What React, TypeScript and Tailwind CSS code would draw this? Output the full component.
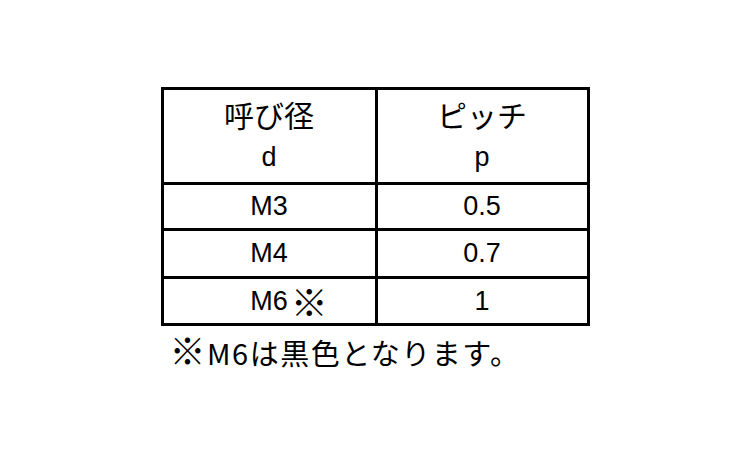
const font = { fontFamily: '"Liberation Sans", "Noto Sans CJK JP", sans-serif' };
const cjk = { fontFamily: '"Noto Sans CJK JP", sans-serif' };

interface Row {
  size: string;
  mark?: boolean;
  pitch: string;
  h: string;
}

const rows: Row[] = [
  { size: "M3", pitch: "0.5", h: "h-[46px]" },
  { size: "M4", pitch: "0.7", h: "h-[48px]" },
  { size: "M6", mark: true, pitch: "1", h: "h-[47px]" },
];

const App = () => {
  return (
    <div
      className="w-[750px] h-[450px] bg-white text-black pt-[87px]"
      style={font}
    >
      <div className="w-[429px] mx-auto">
        <div className="border-[3px] border-black">
          <div className="flex h-[92px] text-[27px]">
            <div className="w-[214px] border-r-[3px] border-black flex flex-col items-center justify-center">
              <span className="leading-[43px] text-[30px]" style={cjk}>
                呼び径
              </span>
              <span className="leading-[43px]">d</span>
            </div>
            <div className="flex-1 flex flex-col items-center justify-center">
              <span className="leading-[43px] text-[30px]" style={cjk}>
                ピッチ
              </span>
              <span className="leading-[43px]">p</span>
            </div>
          </div>
          {rows.map((row) => (
            <div
              key={row.size}
              className={`flex border-t-[3px] border-black text-[27px] ${row.h}`}
            >
              <div className="w-[214px] border-r-[3px] border-black flex items-center justify-center">
                <span className="relative">
                  {row.size}
                  {row.mark && (
                    <span
                      className="absolute left-full top-1/2 -translate-y-1/2 ml-[3px] text-[37px] leading-none"
                      style={cjk}
                    >
                      ※
                    </span>
                  )}
                </span>
              </div>
              <div className="flex-1 flex items-center justify-center">
                {row.pitch}
              </div>
            </div>
          ))}
        </div>
        <p
          className="pl-[9px] mt-[5px] text-[29px] leading-[34px] tracking-[1.5px]"
          style={cjk}
        >
          <span className="text-[36px] leading-none">※</span>M6は黒色となります。
        </p>
      </div>
    </div>
  );
};

export default App;
